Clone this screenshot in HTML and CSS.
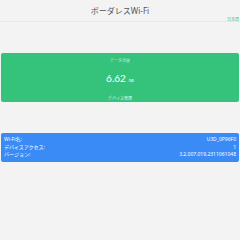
FILE: index.html
```html
<!DOCTYPE html>
<html lang="ja">
<head>
    <meta charset="UTF-8">
    <meta name="viewport" content="width=device-width, initial-scale=1.0">
    <title>ボーダレスWi-Fi</title>
    <link rel="stylesheet" href="styles.css">
</head>
<body>
    <header class="top-bar">
        <h1 class="top-title">ボーダレスWi-Fi</h1>
        <span class="lang-link">日本語</span>
    </header>
    <main class="main">
        <section class="data-card">
            <div class="data-label">データ流量</div>
            <div class="data-value">6.62 <span class="data-unit">GB</span></div>
            <div class="data-link">デバイス管理</div>
        </section>
        <section class="info-card">
            <div class="info-row"><span>Wi-Fi名:</span><span>U3D_0P96F0</span></div>
            <div class="info-row"><span>デバイスアクセス:</span><span>1</span></div>
            <div class="info-row"><span>バージョン:</span><span>3.2.007.019.2311061048</span></div>
        </section>
    </main>
</body>
</html>
```
FILE: styles.css
```css
body {
    font-family: "Noto Sans", "Noto Sans CJK JP", sans-serif;
    background: #f3f3f3;
    margin: 0;
    padding: 0;
}
.top-bar {
    position: relative;
    height: 21px;
    border-bottom: 1px solid #e8e8e8;
    display: flex;
    align-items: center;
    justify-content: center;
}
.top-title {
    margin: 0;
    font-size: 8px;
    font-weight: 400;
    color: #555;
}
.lang-link {
    position: absolute;
    right: 1px;
    bottom: -1px;
    font-size: 4px;
    color: #35c37b;
}
.main {
    padding: 31px 1px 0;
}
.data-card {
    background: #35c37b;
    border-radius: 2px;
    height: 49px;
    color: #fff;
    text-align: center;
    box-sizing: border-box;
    padding-top: 5px;
}
.data-label {
    font-size: 4px;
    line-height: 6px;
    opacity: 0.7;
}
.data-value {
    font-family: Lato, "Noto Sans", sans-serif;
    font-size: 10px;
    line-height: 12px;
    margin-top: 8px;
}
.data-unit {
    font-size: 4px;
}
.data-link {
    font-size: 4px;
    line-height: 6px;
    margin-top: 9px;
    opacity: 0.9;
}
.info-card {
    margin-top: 31px;
    background: #3a8bf6;
    border-radius: 2px;
    color: #fff;
    padding: 3px 3px;
}
.info-row {
    display: flex;
    justify-content: space-between;
    font-size: 5px;
    line-height: 7.5px;
}
```
